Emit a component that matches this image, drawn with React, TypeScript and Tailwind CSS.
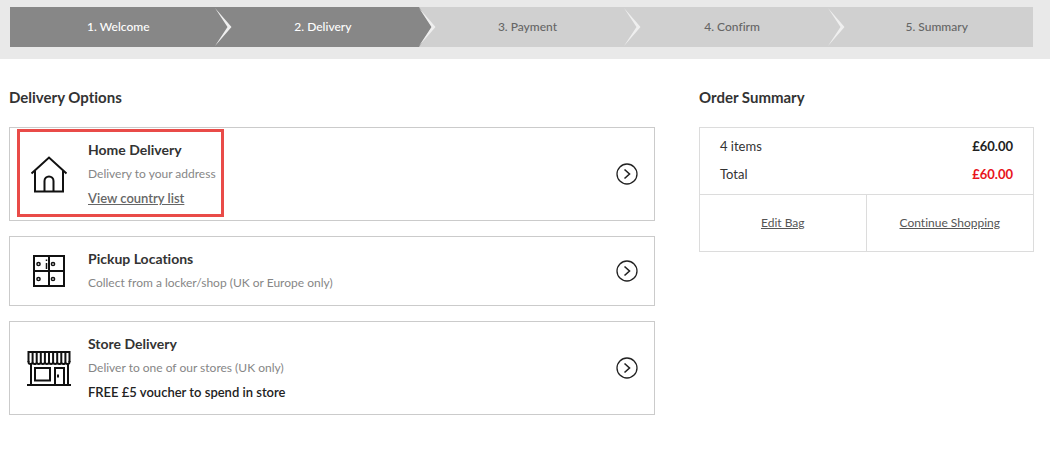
import type { ReactNode } from "react";

const steps = ["Welcome", "Delivery", "Payment", "Confirm", "Summary"];
const currentStep = 2;

function StepDivider({ afterCurrent }: { afterCurrent: boolean }) {
  return (
    <svg className="absolute top-0 left-0 h-10 w-[18px]" viewBox="0 0 18 40" aria-hidden="true">
      {afterCurrent && <path d="M0 0 13 20 0 40Z" fill="#878787" />}
      <path d="M0 1 16.500 20 0 39 12.500 20Z" fill="#efefef" />
    </svg>
  );
}

function Progress() {
  return (
    <nav aria-label="Checkout progress" className="bg-[#e9e9e9] pt-[7px] pr-[17px] pb-3 pl-[10px]">
      <ol className="grid grid-cols-5">
        {steps.map((step, i) => (
          <li
            key={step}
            aria-current={i + 1 === currentStep ? "step" : undefined}
            className={
              i < currentStep
                ? "relative flex h-10 items-center justify-center bg-[#878787] pl-3 text-xs font-medium text-white"
                : "relative flex h-10 items-center justify-center bg-[#d0d0d0] pl-3 text-xs font-medium text-[#666]"
            }
          >
            {i > 0 && <StepDivider afterCurrent={i === currentStep} />}
            {i + 1}. {step}
          </li>
        ))}
      </ol>
    </nav>
  );
}

function HomeIcon() {
  return (
    <svg className="h-[38px] w-[38px]" viewBox="0 0 38 38" fill="none" stroke="#111" strokeWidth="2" aria-hidden="true">
      <path d="M1.500 18.500 19 2.500l17.500 16" />
      <path d="M5 16v20.500h28V16" />
      <path d="M14.500 36.500V26a4.500 4.500 0 0 1 9 0v10.500" />
    </svg>
  );
}

function LockerIcon() {
  return (
    <svg className="h-8 w-8" viewBox="0 0 32 32" fill="none" stroke="#111" strokeWidth="2" aria-hidden="true">
      <path d="M1 1h30v30H1zM16 1v30M1 16h30" />
      <g strokeWidth="1.500">
        <circle cx="5.500" cy="9" r="1.600" />
        <circle cx="20" cy="9" r="1.600" />
        <circle cx="5.500" cy="24" r="1.600" />
        <circle cx="20" cy="24" r="1.600" />
        <path d="M13.500 4.500v1.500M13.500 8v6" />
      </g>
    </svg>
  );
}

function StoreIcon() {
  return (
    <svg className="h-9 w-11" viewBox="0 0 44 36" fill="none" stroke="#111" strokeWidth="2" aria-hidden="true">
      <path d="M1.500 12V2h41v10" />
      <path d="M1.500 11v1a2 2 0 0 0 4.100 0 2 2 0 0 0 4.100 0 2 2 0 0 0 4.100 0 2 2 0 0 0 4.100 0 2 2 0 0 0 4.100 0 2 2 0 0 0 4.100 0 2 2 0 0 0 4.100 0 2 2 0 0 0 4.100 0 2 2 0 0 0 4.100 0 2 2 0 0 0 4.100 0v-1" />
      <path d="M5.600 2v10M9.700 2v10M13.800 2v10M17.900 2v10M22 2v10M26.100 2v10M30.200 2v10M34.300 2v10M38.400 2v10" />
      <path d="M4 14v20.500M41 14v20.500M0 35h44M8 18h15v12.500H8zM28 35V18h9v17" />
      <path d="M31 24.500v3" />
    </svg>
  );
}

type OptionProps = {
  title: string;
  description: string;
  icon: ReactNode;
  highlighted?: boolean;
  children?: ReactNode;
};

function DeliveryOption({ title, description, icon, highlighted, children }: OptionProps) {
  return (
    <li className="relative flex items-center border border-[#cbcbcb] py-[10px] pr-4">
      {highlighted && (
        <span className="pointer-events-none absolute top-px left-[7px] h-[88px] w-[207px] border-3 border-[#e94b48]" />
      )}
      <span className="flex w-[78px] shrink-0 justify-center">{icon}</span>
      <div className="grow">
        <h3 className="text-sm leading-6 font-bold text-[#333]">{title}</h3>
        <p className="text-xs leading-6 text-[#868686]">{description}</p>
        {children}
      </div>
      <button type="button" aria-label={`Choose ${title}`} className="shrink-0">
        <svg className="h-[22px] w-[22px]" viewBox="0 0 22 22" fill="none" stroke="#222" aria-hidden="true">
          <circle cx="11" cy="11" r="10" strokeWidth="1.300" />
          <path d="M8.500 6.500 13.500 11l-5 4.500" strokeWidth="1.600" />
        </svg>
      </button>
    </li>
  );
}

function OrderSummary() {
  return (
    <section>
      <h2 className="text-[15px] leading-6 font-bold text-[#333]">Order Summary</h2>
      <div className="mt-[18px] border border-[#dcdcdc]">
        <dl className="px-5 pt-1 pb-[6px] text-[13px] leading-7 text-[#333]">
          <div className="flex justify-between">
            <dt>4 items</dt>
            <dd className="font-bold text-[#222]">£60.00</dd>
          </div>
          <div className="flex justify-between">
            <dt>Total</dt>
            <dd className="font-bold text-[#e8141b]">£60.00</dd>
          </div>
        </dl>
        <div className="grid grid-cols-2 divide-x divide-[#dcdcdc] border-t border-[#dcdcdc] text-xs text-[#555]">
          <a href="#bag" className="flex h-14 items-center justify-center underline">Edit Bag</a>
          <a href="#shop" className="flex h-14 items-center justify-center underline">Continue Shopping</a>
        </div>
      </div>
    </section>
  );
}

export default function App() {
  return (
    <div className="min-h-screen bg-white font-['Lato',sans-serif] [font-variant-ligatures:none]">
      <Progress />
      <main className="grid grid-cols-[646fr_335fr] gap-11 pt-[26px] pr-4 pb-6 pl-[9px]">
        <section>
          <h2 className="text-[15px] leading-6 font-bold text-[#333]">Delivery Options</h2>
          <ul className="mt-[18px] flex flex-col gap-[15px]">
            <DeliveryOption title="Home Delivery" description="Delivery to your address" icon={<HomeIcon />} highlighted>
              <a href="#countries" className="block w-fit text-[13px] leading-6 font-semibold text-[#666] underline">
                View country list
              </a>
            </DeliveryOption>
            <DeliveryOption
              title="Pickup Locations"
              description="Collect from a locker/shop (UK or Europe only)"
              icon={<LockerIcon />}
            />
            <DeliveryOption
              title="Store Delivery"
              description="Deliver to one of our stores (UK only)"
              icon={<StoreIcon />}
            >
              <p className="text-[13px] leading-6 font-semibold text-[#222]">FREE £5 voucher to spend in store</p>
            </DeliveryOption>
          </ul>
        </section>
        <OrderSummary />
      </main>
    </div>
  );
}
